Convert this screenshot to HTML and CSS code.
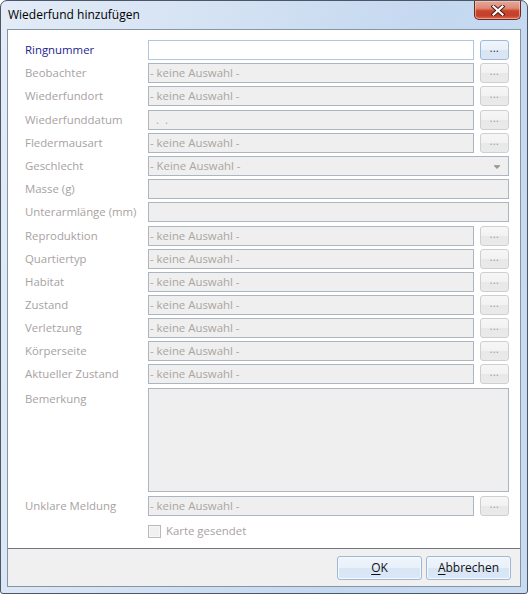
FILE: index.html
```html
<!DOCTYPE html>
<html lang="de">
<head>
<meta charset="utf-8">
<title>Wiederfund hinzufügen</title>
<link rel="stylesheet" href="styles.css">
</head>
<body>
<div class="window">
  <div class="titlebar">
    <span class="title">Wiederfund hinzufügen</span>
    <div class="close">
      <svg width="14" height="11" viewBox="0 0 14 11">
        <path d="M2.5 1.5 L11.5 9.5 M11.5 1.5 L2.5 9.5" stroke="#4a1a12" stroke-width="4" stroke-linecap="square" fill="none"/>
        <path d="M2.5 1.5 L11.5 9.5 M11.5 1.5 L2.5 9.5" stroke="#ffffff" stroke-width="2.2" stroke-linecap="square" fill="none"/>
      </svg>
    </div>
  </div>
  <div class="client">
    <div class="form">
      <div class="row">
        <label class="lbl active">Ringnummer</label>
        <div class="field enabled"></div>
        <div class="dots focus">...</div>
      </div>
      <div class="row">
        <label class="lbl">Beobachter</label>
        <div class="field">- keine Auswahl -</div>
        <div class="dots">...</div>
      </div>
      <div class="row">
        <label class="lbl">Wiederfundort</label>
        <div class="field">- keine Auswahl -</div>
        <div class="dots">...</div>
      </div>
      <div class="row plus1">
        <label class="lbl">Wiederfunddatum</label>
        <div class="field date"><span class="dot">.</span><span class="dot">.</span></div>
        <div class="dots">...</div>
      </div>
      <div class="row">
        <label class="lbl">Fledermausart</label>
        <div class="field">- keine Auswahl -</div>
        <div class="dots">...</div>
      </div>
      <div class="row">
        <label class="lbl">Geschlecht</label>
        <div class="field wide combo">- Keine Auswahl -<span class="arrow"></span></div>
      </div>
      <div class="row">
        <label class="lbl">Masse (g)</label>
        <div class="field wide"></div>
      </div>
      <div class="row">
        <label class="lbl">Unterarmlänge (mm)</label>
        <div class="field wide"></div>
      </div>
      <div class="row plus1">
        <label class="lbl">Reproduktion</label>
        <div class="field">- keine Auswahl -</div>
        <div class="dots">...</div>
      </div>
      <div class="row">
        <label class="lbl">Quartiertyp</label>
        <div class="field">- keine Auswahl -</div>
        <div class="dots">...</div>
      </div>
      <div class="row">
        <label class="lbl">Habitat</label>
        <div class="field">- keine Auswahl -</div>
        <div class="dots">...</div>
      </div>
      <div class="row">
        <label class="lbl">Zustand</label>
        <div class="field">- keine Auswahl -</div>
        <div class="dots">...</div>
      </div>
      <div class="row">
        <label class="lbl">Verletzung</label>
        <div class="field">- keine Auswahl -</div>
        <div class="dots">...</div>
      </div>
      <div class="row">
        <label class="lbl">Körperseite</label>
        <div class="field">- keine Auswahl -</div>
        <div class="dots">...</div>
      </div>
      <div class="row">
        <label class="lbl">Aktueller Zustand</label>
        <div class="field">- keine Auswahl -</div>
        <div class="dots">...</div>
      </div>
      <div class="row memo-row plus1">
        <label class="lbl memo-lbl">Bemerkung</label>
        <div class="field wide memo"></div>
      </div>
      <div class="row plus1">
        <label class="lbl">Unklare Meldung</label>
        <div class="field">- keine Auswahl -</div>
        <div class="dots">...</div>
      </div>
      <div class="check-row">
        <span class="checkbox"></span>
        <span class="check-lbl">Karte gesendet</span>
      </div>
    </div>
    <div class="footer">
      <div class="btn"><u>O</u>K</div>
      <div class="btn"><u>A</u>bbrechen</div>
    </div>
  </div>
</div>
</body>
</html>
```

FILE: styles.css
```css
* { box-sizing: border-box; }
html, body { margin: 0; padding: 0; background: #ffffff; }
body {
  width: 528px;
  height: 594px;
  font-family: "Segoe UI", "Open Sans", "Noto Sans", sans-serif;
  font-size: 11.4px;
}
.window {
  width: 528px;
  height: 594px;
  border: 1px solid #4b5766;
  border-radius: 7px 7px 3px 3px;
  background: linear-gradient(100deg, #e3ecf7 0%, #d4e2f3 35%, #c4d8f0 70%, #c8dbf1 100%);
  display: flex;
  flex-direction: column;
  padding: 0 6px 6px 6px;
  overflow: hidden;
}
.titlebar {
  height: 28px;
  flex: none;
  display: flex;
  justify-content: space-between;
  align-items: flex-start;
}
.title {
  margin-top: 6px;
  margin-left: 1px;
  font-size: 12px;
  color: #000000;
  line-height: 16px;
}
.close {
  width: 47px;
  height: 19px;
  border: 1px solid #6a2a1e;
  border-top: none;
  border-radius: 0 0 5px 5px;
  background: linear-gradient(#e8a797 0%, #dd8a76 40%, #c8442c 55%, #c5402a 80%, #d86a50 100%);
  box-shadow: inset 0 0 0 1px rgba(255,210,200,0.55);
  display: flex;
  align-items: center;
  justify-content: center;
}
.client {
  flex: 1;
  border: 1px solid #8595a8;
  background: #ffffff;
  display: flex;
  flex-direction: column;
}
.form {
  flex: 1;
  padding: 10px 0 0 17px;
  display: flex;
  flex-direction: column;
  gap: 3px;
}
.row {
  display: flex;
  align-items: center;
  height: 20px;
}
.row.plus1 { margin-top: 1px; }
.lbl {
  width: 123px;
  flex: none;
  color: #a8a2a2;
  line-height: 16px;
  white-space: nowrap;
}
.lbl.active { color: #232390; }
.field {
  width: 326px;
  height: 20px;
  flex: none;
  border: 1px solid #adb5c0;
  background: #efefef;
  color: #aaa6a2;
  padding-left: 1px;
  line-height: 17px;
  white-space: nowrap;
  position: relative;
}
.field.enabled {
  background: #ffffff;
  border-color: #b1c6df;
}
.field.wide { width: 361px; }
.field.date { padding-left: 7px; }
.field.date .dot { display: inline-block; width: 9px; }
.combo .arrow {
  position: absolute;
  right: 8px;
  top: 9px;
  width: 0;
  height: 0;
  border-left: 3px solid transparent;
  border-right: 3px solid transparent;
  border-top: 3px solid #9a9896;
}
.combo .arrow::before {
  content: "";
  position: absolute;
  left: -3px;
  top: -4px;
  width: 6px;
  height: 1px;
  background: #a6a4a2;
}
.dots {
  width: 29px;
  height: 20px;
  flex: none;
  margin-left: 6px;
  border: 1px solid #cdd0d3;
  border-radius: 3px;
  background: linear-gradient(#f6f6f6 0%, #f2f2f2 50%, #e8e8e8 51%, #eaeaea 100%);
  color: #949494;
  font-size: 10px;
  line-height: 14px;
  text-align: center;
  letter-spacing: 0.5px;
}
.dots.focus {
  border-color: #9fbad9;
  background: linear-gradient(#f0f5fb 0%, #e9f0f9 50%, #d9e5f4 51%, #dbe6f4 100%);
  color: #1a1a1a;
}
.memo-row {
  height: 104px;
  align-items: flex-start;
}
.memo-lbl { margin-top: 3px; }
.field.memo { height: 104px; }
.check-row {
  margin-top: 5px;
  padding-left: 123px;
  display: flex;
  align-items: center;
  height: 14px;
}
.checkbox {
  width: 13px;
  height: 13px;
  border: 1px solid #b9b9b9;
  background: #f0f0f0;
  box-shadow: inset 0 0 0 1px #f7f7f7;
  margin-top: 1px;
}
.check-lbl {
  margin-left: 5px;
  color: #a8a2a2;
  line-height: 16px;
}
.footer {
  flex: none;
  height: 38px;
  border-top: 1px solid #6f7782;
  background: #f0f0f0;
  display: flex;
  justify-content: flex-end;
  align-items: flex-start;
  gap: 4px;
  padding: 7px 9px 0 0;
}
.btn {
  width: 85px;
  height: 24px;
  border: 1px solid #9fb7d6;
  border-radius: 3px;
  background: linear-gradient(#eff5fc 0%, #e8f0f9 50%, #d8e5f5 51%, #dbe7f5 100%);
  box-shadow: inset 0 0 0 1px #f6fafe;
  color: #111111;
  font-size: 12px;
  line-height: 21px;
  text-align: center;
}
.btn u { text-decoration-thickness: 1px; text-underline-offset: 2px; }
```
